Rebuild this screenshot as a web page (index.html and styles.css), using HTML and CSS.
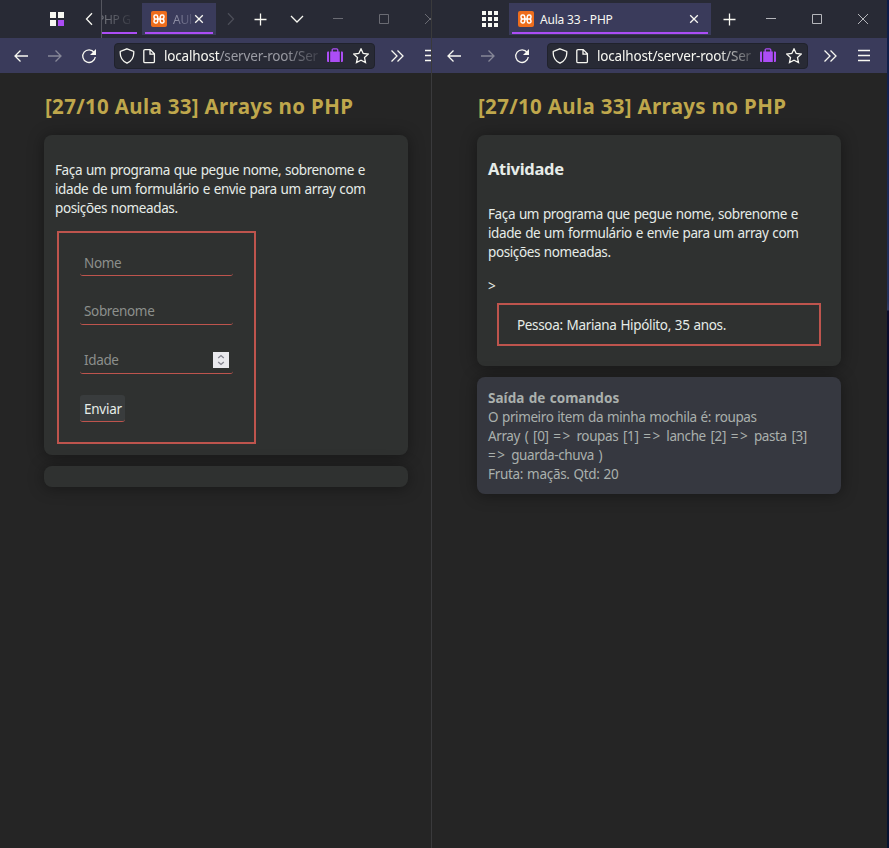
FILE: index.html
```html
<!DOCTYPE html>
<html lang="pt-BR">
<head>
<meta charset="utf-8">
<title>Aula 33 - PHP</title>
<link rel="stylesheet" href="styles.css">
</head>
<body>
<svg class="defs" aria-hidden="true">
  <symbol id="back" viewBox="0 0 16 16"><path d="M15 8H2M7.500 2.500L2 8l5.500 5.500"/></symbol>
  <symbol id="forward" viewBox="0 0 16 16"><path d="M1 8h13M8.500 2.500L14 8l-5.500 5.500"/></symbol>
  <symbol id="reload" viewBox="0 0 16 16"><path d="M13.200 4.500A6.300 6.300 0 1 0 14.300 9"/><path class="solid" d="M15 1v6H9z"/></symbol>
  <symbol id="shield" viewBox="0 0 16 16"><path d="M8 .8l6.700 2.600c.5 5-1.700 9.400-6.700 11.800C3 12.800.8 8.400 1.300 3.400z"/></symbol>
  <symbol id="page" viewBox="0 0 16 16"><path d="M4 1.600h5.200l4.200 4.200v7.600q0 1.200-1.200 1.200H4q-1.200 0-1.200-1.200V2.800q0-1.200 1.200-1.200zM9 1.600v4.500h4.400"/></symbol>
  <symbol id="case" viewBox="0 0 16 16"><path class="solid" d="M0 4.500q0-1 1-1h1V14H1q-1 0-1-1zM14 3.500h1q1 0 1 1V13q0 1-1 1h-1zM3.200 3.500h9.600V14H3.200z"/><path d="M5.200 4V2q0-1.200 1.200-1.200h3.200q1.200 0 1.200 1.200v2"/></symbol>
  <symbol id="star" viewBox="0 0 16 16"><path d="M8 .9l2.200 4.600 5 .6-3.700 3.500 1 5L8 12.200l-4.500 2.400 1-5L.8 6.100l5-.6z"/></symbol>
  <symbol id="more" viewBox="0 0 16 16"><path d="M2.500 2.500L8 8l-5.500 5.500M8.500 2.500L14 8l-5.500 5.500"/></symbol>
  <symbol id="menu" viewBox="0 0 16 16"><path d="M2 2.500h12M2 7.500h12M2 12.500h12"/></symbol>
  <symbol id="plus" viewBox="0 0 16 16"><path d="M7.500 2.500v12M1.500 8.500h12"/></symbol>
  <symbol id="down" viewBox="0 0 16 16"><path d="M2 5l6 6 6-6"/></symbol>
  <symbol id="left" viewBox="0 0 16 16"><path d="M11 2.300L5.500 8l5.500 5.700"/></symbol>
  <symbol id="right" viewBox="0 0 16 16"><path d="M5 2.300L10.500 8 5 13.700"/></symbol>
  <symbol id="x" viewBox="0 0 16 16"><path d="M4.200 4.200l7.600 7.600M11.800 4.200l-7.600 7.600"/></symbol>
  <symbol id="close" viewBox="0 0 16 16"><path d="M3 3l10 10M13 3L3 13"/></symbol>
  <symbol id="min" viewBox="0 0 16 16"><path d="M3 7.500h10"/></symbol>
  <symbol id="max" viewBox="0 0 16 16"><path d="M3.500 3.500h9v9h-9z"/></symbol>
  <symbol id="containers" viewBox="0 0 16 16"><path class="solid" d="M1 1h6v6H1zM9 1h6v6H9zM1 9h6v6H1z"/><path class="violet" d="M9 9h6v6H9z"/></symbol>
  <symbol id="apps" viewBox="0 0 16 16"><path class="solid" d="M0 0h4v4H0zM6 0h4v4H6zM12 0h4v4h-4zM0 6h4v4H0zM6 6h4v4H6zM12 6h4v4h-4zM0 12h4v4H0zM6 12h4v4H6zM12 12h4v4h-4z"/></symbol>
  <symbol id="xampp" viewBox="0 0 16 16"><rect class="orange" width="16" height="16" rx="2"/><path class="mark" d="M3 6V5.400Q3 4 4.400 4h.8Q6.400 4 6.600 5.400L7 8H5M7 8l-.4 2.600Q6.400 12 5.200 12h-.8Q3 12 3 10.600V10q0-1.500 1.300-2Q3 7.500 3 6M13 6V5.400Q13 4 11.600 4h-.8Q9.600 4 9.400 5.400L9 8h2M9 8l.4 2.600q.2 1.400 1.400 1.400h.8q1.400 0 1.400-1.400V10q0-1.500-1.300-2Q13 7.500 13 6M7 8h2"/></symbol>
</svg>

<section class="window first">
  <header class="tabs">
    <span class="slot apps"><svg><use href="#containers"/></svg></span>
    <span class="slot prev"><svg><use href="#left"/></svg></span>
    <div class="tab-cut"><span>PHP G</span></div>
    <div class="tab small"><svg><use href="#xampp"/></svg><span class="tab-title faded">AUl</span><svg class="tab-x"><use href="#x"/></svg></div>
    <span class="slot next"><svg><use href="#right"/></svg></span>
    <span class="slot add"><svg><use href="#plus"/></svg></span>
    <span class="slot list"><svg><use href="#down"/></svg></span>
    <div class="controls inactive"><svg><use href="#min"/></svg><svg><use href="#max"/></svg><svg><use href="#close"/></svg></div>
  </header>
  <nav class="toolbar">
    <span class="slot tool"><svg><use href="#back"/></svg></span>
    <span class="slot tool dim"><svg><use href="#forward"/></svg></span>
    <span class="slot tool"><svg><use href="#reload"/></svg></span>
    <div class="url"><svg><use href="#shield"/></svg><svg><use href="#page"/></svg><span class="address"><b>localhost</b>/server-root/Ser</span><svg class="bag"><use href="#case"/></svg><svg><use href="#star"/></svg></div>
    <span class="slot overflow"><svg><use href="#more"/></svg></span>
    <span class="slot burger"><svg><use href="#menu"/></svg></span>
  </nav>
  <main>
    <h1>[27/10 Aula 33] Arrays no PHP</h1>
    <article class="card form-card">
      <p>Faça um programa que pegue nome, sobrenome e<br>idade de um formulário e envie para um array com<br>posições nomeadas.</p>
      <form>
        <label class="field name">Nome</label>
        <label class="field">Sobrenome</label>
        <label class="field">Idade<svg class="spinner" viewBox="0 0 16 16"><path d="M5.200 6L8 3.500 10.800 6M5.200 10L8 12.500l2.800-2.500"/></svg></label>
        <button type="button">Enviar</button>
      </form>
    </article>
    <article class="card empty"></article>
  </main>
</section>

<section class="window second">
  <header class="tabs">
    <span class="slot apps"><svg><use href="#apps"/></svg></span>
    <div class="tab wide"><svg><use href="#xampp"/></svg><span class="tab-title">Aula 33 - PHP</span><svg class="tab-x"><use href="#x"/></svg></div>
    <span class="slot add"><svg><use href="#plus"/></svg></span>
    <div class="controls"><svg><use href="#min"/></svg><svg><use href="#max"/></svg><svg><use href="#close"/></svg></div>
  </header>
  <nav class="toolbar">
    <span class="slot tool"><svg><use href="#back"/></svg></span>
    <span class="slot tool dim"><svg><use href="#forward"/></svg></span>
    <span class="slot tool"><svg><use href="#reload"/></svg></span>
    <div class="url"><svg><use href="#shield"/></svg><svg><use href="#page"/></svg><span class="address bright">localhost/server-root/Ser</span><svg class="bag"><use href="#case"/></svg><svg><use href="#star"/></svg></div>
    <span class="slot overflow"><svg><use href="#more"/></svg></span>
    <span class="slot burger"><svg><use href="#menu"/></svg></span>
  </nav>
  <main>
    <h1>[27/10 Aula 33] Arrays no PHP</h1>
    <article class="card result-card">
      <h2>Atividade</h2>
      <p>Faça um programa que pegue nome, sobrenome e<br>idade de um formulário e envie para um array com<br>posições nomeadas.</p>
      <div class="gt">&gt;</div>
      <div class="result">Pessoa: Mariana Hipólito, 35 anos.</div>
    </article>
    <article class="card output">
      <strong>Saída de comandos</strong>
      <div>O primeiro item da minha mochila é: roupas</div>
      <div class="array">Array ( [0] <i>=&gt;</i> roupas [1] <i>=&gt;</i> lanche [2] <i>=&gt;</i> pasta [3]<br><i>=&gt;</i> guarda-chuva )</div>
      <div class="fruit">Fruta: maçãs. Qtd: 20</div>
    </article>
  </main>
</section>
<div class="desktop"></div>
</body>
</html>
```

FILE: styles.css
```css
* { box-sizing: border-box; }
body {
  margin: 0;
  height: 848px;
  display: flex;
  overflow: hidden;
  background: #252525;
  color: #e6ece8;
  font: 13.5px/19px "Noto Sans", "Open Sans", sans-serif;
  white-space: nowrap;
}
.defs { position: absolute; width: 0; height: 0; }
svg {
  display: block;
  flex: none;
  width: 16px;
  height: 16px;
  fill: none;
  stroke: currentColor;
  stroke-width: 1.3;
}
.solid { fill: currentColor; stroke: none; }
.violet { fill: #ac4df5; stroke: none; }
.orange { fill: #ee6d1c; stroke: none; }
.mark { fill: none; stroke: #fff; stroke-width: 1.5; }

.window { flex: none; overflow: hidden; background: #252525; }
.first { width: 432px; border-right: 1px solid #3a3a3c; }
.second { width: 455px; }
.desktop { flex: 1; background: linear-gradient(#0c1b48, #24315b 300px, #303b63 310px, #0b0c2d 311px, #071331); }

.tabs { display: flex; width: 454px; height: 38px; background: #282a35; color: #f8f8f2; }
.slot { display: flex; flex: none; align-items: center; justify-content: center; }
.dim { opacity: .4; }
.apps { width: 36px; margin-left: 39px; }
.prev { width: 27px; }
.tab-cut {
  width: 35px;
  height: 38px;
  margin-right: 5px;
  padding-top: 10px;
  overflow: hidden;
  font-size: 12px;
  box-shadow: -1px 0 #55565f;
  background: linear-gradient(#ac4df5, #ac4df5) 0 32px / 36px 2px no-repeat;
}
.tab-cut span { margin-left: -5px; letter-spacing: -.3px; background: linear-gradient(90deg, #85878e, #383a44 95%); background-clip: text; color: transparent; }
.tab {
  display: flex;
  align-items: center;
  height: 32px;
  margin-top: 3px;
  padding: 0 9px;
  font-size: 12px;
  background: linear-gradient(#ac4df5, #ac4df5) center 29px / calc(100% - 6px) 2px no-repeat #3a3b5b;
}
.small { width: 74px; }
.small .tab-title { margin-right: -4px; }
.wide { width: 202px; margin-left: 1px; }
.tab-title { flex: 1; margin-left: 6px; letter-spacing: -.2px; }
.faded { background: linear-gradient(90deg, #9a9aae, #4a4b6b 95%); background-clip: text; color: transparent; }
.next { width: 29px; color: #4c4e58; }
.add { width: 31px; }
.list { width: 42px; }
.second .add { width: 37px; }
.controls { display: flex; align-items: center; gap: 30px; margin-left: auto; padding-right: 16px; color: #b5b6bb; }
.controls svg { stroke-width: 1; }
.inactive { color: #6a6b73; }

.toolbar { display: flex; align-items: center; width: 454px; height: 35px; padding-left: 4px; background: #3a3b5b; color: #f8f8f2; }
.tool { width: 34px; }
.url { display: flex; align-items: center; flex: none; width: 261px; height: 26px; margin-left: 8px; padding: 0 5px 0 4px; border: 1px solid #20222c; border-radius: 4px; background: #282a35; }
.url svg + svg { margin-left: 6px; }
.address { width: 157px; margin: 0 7px; padding-top: 2px; overflow: hidden; letter-spacing: -.17px; color: #9a9ba3; -webkit-mask-image: linear-gradient(90deg, #000 78%, transparent 105%); mask-image: linear-gradient(90deg, #000 78%, transparent 105%); }
.address b { font-weight: 400; color: #f8f8f2; }
.bright { color: #f8f8f2; }
.url .bag { margin-left: 2px; color: #ac4df5; }
.url .bag + svg { margin-left: 10px; }
.overflow { width: 43px; }
.burger { width: 26px; }

.second .tabs, .second .toolbar { width: 455px; padding-left: 1px; }
.second .toolbar { padding-left: 5px; }

main { padding: 22px 0 0 44px; letter-spacing: -.39px; word-spacing: .7px; }
.second main { padding-left: 45px; }
h1 { height: 24px; margin: 0 0 16px 1px; font-size: 20.5px; line-height: 23px; letter-spacing: .33px; word-spacing: 0; color: #bfa74c; }
.card { width: 364px; margin-bottom: 11px; padding: 0 11px; border-radius: 8px; background: #2f3130; box-shadow: 0 1px 16px rgba(0, 0, 0, .4); }
.card p { margin: 0; }
.form-card { height: 320px; padding-top: 26px; }
form { width: 199px; height: 213px; margin: 13px 0 0 2px; padding: 16px 21px; border: 2px solid #be544d; }
.field, button { display: flex; align-items: center; height: 27px; border: 0 solid #be544d; border-bottom-width: 1px; border-radius: 3px; }
.field { width: 153px; margin-bottom: 22px; padding: 0 4px; letter-spacing: -.35px; color: #8c8f8c; }
.name { padding-top: 2px; }
.field:nth-child(3) { margin-bottom: 21px; }
.spinner { margin-left: auto; background: #e9e9ed; color: #84848f; }
button { width: 45px; padding: 2px 4px 0; background: #393c3d; color: #e6ece8; font: inherit; letter-spacing: -.25px; }
.empty { height: 21px; }
.result-card { height: 231px; padding-top: 22px; }
h2 { margin: 0 0 24px; font-size: 16.5px; line-height: 24px; letter-spacing: -.3px; }
.gt { margin-top: 15px; }
.result { width: 324px; height: 43px; margin: 7px 0 0 9px; padding-left: 18px; border: 2px solid #be544d; line-height: 40px; letter-spacing: -.34px; }
.output { height: 117px; padding-top: 12px; background: #363840; color: #aab0ad; }
.output strong { display: block; letter-spacing: .05px; }
.array { word-spacing: 1.6px; }
.array i { font-style: normal; letter-spacing: 1.5px; }
.fruit { letter-spacing: -.3px; }
```
